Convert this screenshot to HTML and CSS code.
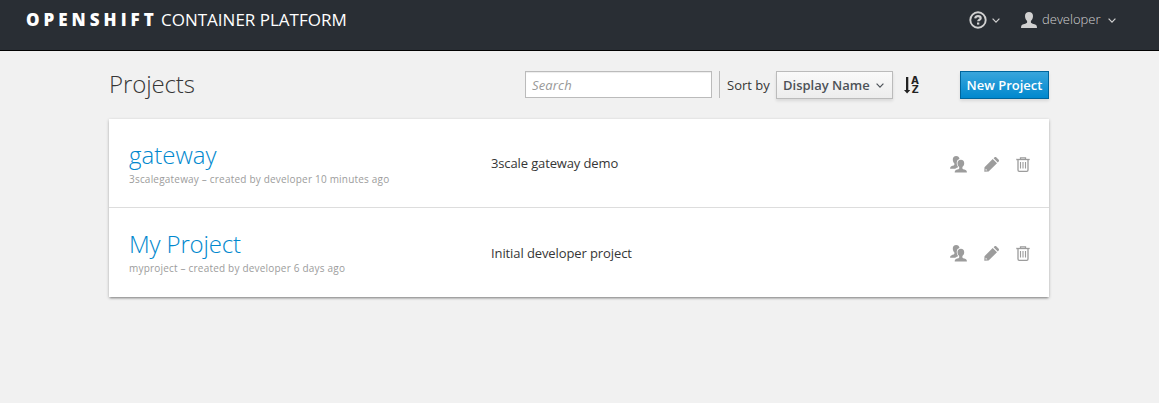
FILE: index.html
```html
<!DOCTYPE html>
<html lang="en">
<head>
<meta charset="utf-8">
<title>OpenShift Container Platform</title>
<link rel="stylesheet" href="styles.css">
</head>
<body>
<svg width="0" height="0" class="sprites" aria-hidden="true">
  <symbol id="chevron" viewBox="0 0 8 5"><path d="M.6 .7 4 4.1 7.4 .7" fill="none" stroke="currentColor" stroke-width="1.2"/></symbol>
  <symbol id="user" viewBox="0 0 16 16"><path d="M8 0C5.700 0 4 1.600 4 4c0 2.200.9 4 2.100 5v1.400C5.600 11.700 1.300 12 .6 13.300.2 14 0 15 0 16h16c0-1-.2-2-.6-2.700-.7-1.300-5-1.600-5.500-2.900V9C11.100 8 12 6.200 12 4 12 1.600 10.300 0 8 0z" fill="currentColor"/></symbol>
  <symbol id="users" viewBox="0 0 17 17">
    <path d="M6.200 0C4 0 2.800 1.400 2.800 3.500c0 1.700.6 3 1.600 3.900v1.300C4 9.700 1.100 9.900.5 11c-.3.500-.4 1.100-.4 1.700h5.200c.8-.9 2.300-1.100 2.800-1.700C7 9.600 6.600 8 6.800 6.300 7 4.500 7.900 3.500 9.500 3.100 9.300 1.200 8.100 0 6.200 0z" fill="currentColor"/>
    <path d="M10.900 3.800C8.700 3.800 7.500 5.200 7.500 7.200c0 1.700.6 2.900 1.700 3.800v1.400c-.4 1-3.500 1.200-4.100 2.300-.3.500-.4 1.100-.4 1.900h12.200c0-.8-.1-1.400-.4-1.900-.6-1.100-3.700-1.300-4.100-2.300V11c1.100-.9 1.800-2.100 1.800-3.800C14.200 5.200 13.100 3.800 10.900 3.800z" fill="currentColor"/>
  </symbol>
  <symbol id="pencil" viewBox="0 0 15 15"><path fill="currentColor" fill-rule="evenodd" d="M8.700 2 13 6.300 4.600 14.500.3 14.700.5 10.200zM9.600 1.200 10.600.3c.4-.4 1.200-.4 1.600 0l2.500 2.500c.4.400.4 1.200 0 1.600l-.9 1zM1.700 11.700l-.1 1.700 1.700-.1z"/></symbol>
  <symbol id="trash" viewBox="0 0 14 15"><g fill="none" stroke="currentColor"><path d="M.3 2.500H13.700" stroke-width="1.300"/><path d="M4.500 2.500V.8H9.500V2.500M2 2.500V13c0 .8.400 1.300 1.200 1.300h7.600c.8 0 1.200-.5 1.200-1.300V2.500" stroke-width="1.300"/><path d="M4.500 5v6.500M7 5v6.500M9.500 5v6.500" stroke-width="1.100"/></g></symbol>
</svg>
<header class="navbar">
  <div class="brand"><strong>OPENSHIFT</strong><span>CONTAINER PLATFORM</span></div>
  <nav class="tools">
    <a class="help">
      <svg class="icon-help" viewBox="0 0 18 18"><circle cx="9" cy="9" r="7.700" fill="none" stroke="currentColor" stroke-width="1.900"/><path d="M6.200 7.400C6.500 5.900 7.500 5.200 9 5.200c1.600 0 2.700.8 2.700 2 0 1.500-2.500 1.500-2.500 3.100" fill="none" stroke="currentColor" stroke-width="2.200"/><path d="M8 11.500h2.300v2.100H8z" fill="currentColor"/></svg>
      <svg class="chevron"><use href="#chevron"/></svg>
    </a>
    <a class="account">
      <svg class="icon-user"><use href="#user"/></svg>
      <span>developer</span>
      <svg class="chevron"><use href="#chevron"/></svg>
    </a>
  </nav>
</header>
<main class="container">
  <div class="toolbar">
    <h1>Projects</h1>
    <input class="search" type="text" placeholder="Search">
    <div class="sort">
      <span>Sort by</span>
      <button class="btn btn-default"><span>Display Name</span><svg class="chevron"><use href="#chevron"/></svg></button>
      <svg class="icon-sort" viewBox="0 0 16 17"><path d="M2 0h2.300v13h2L3.100 16.600 0 13h2z" fill="currentColor"/><text x="7" y="7.300" textLength="8" lengthAdjust="spacingAndGlyphs">A</text><text x="7.400" y="16.300" textLength="7.200" lengthAdjust="spacingAndGlyphs">Z</text></svg>
    </div>
    <button class="btn btn-primary">New Project</button>
  </div>
  <section class="projects">
    <article class="project">
      <div class="title"><h2>gateway</h2><small>3scalegateway – created by developer 10 minutes ago</small></div>
      <p>3scale gateway demo</p>
      <div class="actions">
        <svg class="icon-users"><use href="#users"/></svg>
        <svg class="icon-pencil"><use href="#pencil"/></svg>
        <svg class="icon-trash"><use href="#trash"/></svg>
      </div>
    </article>
    <article class="project">
      <div class="title"><h2>My Project</h2><small>myproject – created by developer 6 days ago</small></div>
      <p>Initial developer project</p>
      <div class="actions">
        <svg class="icon-users"><use href="#users"/></svg>
        <svg class="icon-pencil"><use href="#pencil"/></svg>
        <svg class="icon-trash"><use href="#trash"/></svg>
      </div>
    </article>
  </section>
</main>
</body>
</html>
```
FILE: styles.css
```css
* { box-sizing: border-box; }
body {
  margin: 0;
  min-height: 100vh;
  background: #f1f1f1;
  color: #363636;
  font: 13px/20px "Open Sans", sans-serif;
}
svg { display: block; flex: none; }
.sprites { position: absolute; }
.navbar {
  display: flex;
  justify-content: space-between;
  height: 51px;
  padding: 8px 43px 0 26px;
  background: #292e34;
  border-bottom: 1px solid #030303;
  color: #fff;
}
.brand { display: flex; height: 24px; line-height: 24px; font-size: 17px; white-space: nowrap; }
.brand strong { width: 135px; font-weight: 800; letter-spacing: 4px; }
.brand span { font-weight: 400; }
.tools { display: flex; height: 24px; color: #d1d1d1; }
.help, .account { display: flex; align-items: center; }
.help { margin-right: 21px; }
.help .chevron { margin: 1px 0 0 5px; }
.account span { margin: -2px 7px 0 5px; font-weight: 300; width: 59px; white-space: nowrap; }
.account .chevron { margin-top: 1px; }
.chevron { width: 8px; height: 5px; }
.icon-help { width: 18px; height: 18px; margin-top: -1px; }
.icon-user { width: 16px; height: 16px; }
.container { width: 940px; margin: 0 auto 0 109px; padding: 20px 0; }
.toolbar { display: flex; height: 28px; }
h1, h2 { margin: 0; font-size: 24px; font-weight: 300; line-height: 26px; letter-spacing: -.1px; }
h2 { letter-spacing: 0; }
h1 { width: 416px; }
.search {
  width: 187px;
  height: 27px;
  padding: 2px 6px;
  border: 1px solid #bbb;
  background: #fff;
  box-shadow: inset 0 1px 1px rgba(0,0,0,.075);
  font: 13px/20px "Open Sans", sans-serif;
}
.search::placeholder { color: #999; font-style: italic; opacity: 1; letter-spacing: .15px; }
.sort { display: flex; height: 27px; margin-left: 7px; padding-left: 7px; border-left: 1px solid #bbb; }
.sort > span { width: 49px; line-height: 28px; white-space: nowrap; }
.btn {
  display: flex;
  align-items: center;
  height: 28px;
  padding: 0 6px;
  border: 1px solid #bbb;
  font: 600 13px/20px "Open Sans", sans-serif;
  box-shadow: 0 2px 3px rgba(3,3,3,.1);
  white-space: nowrap;
}
.btn-default { width: 117px; color: #4d5258; background: linear-gradient(#fafafa, #ededed); justify-content: space-between; }
.btn-default .chevron { margin: 1px 2px 0 0; }
.btn-primary { width: 89px; margin-left: auto; justify-content: center; color: #fff; border-color: #00659c; background: linear-gradient(#39a5dc, #0088ce); }
.icon-sort { width: 16px; height: 17px; margin: 6px 0 0 11px; color: #222; overflow: visible; }
.icon-sort text { font: bold 10px "DejaVu Sans Mono", monospace; fill: currentColor; }
.projects { margin-top: 20px; background: #fff; box-shadow: 0 1px 3px rgba(3,3,3,.25), 0 2px 2px -1px rgba(3,3,3,.3); }
.project { display: grid; grid-template-columns: 362px 1fr auto; height: 89px; padding: 23px 19px 0 20px; }
.project:first-child { border-bottom: 1px solid #ddd; }
.project:last-child h2 { letter-spacing: -.15px; }
.title h2 { color: #0088ce; }
.title small { display: block; margin-top: 4px; color: #9c9c9c; font-size: 10px; line-height: 14px; letter-spacing: .2px; }
.project p { margin: 11px 0 0; letter-spacing: -.13px; }
.project:last-child p { margin-top: 12px; letter-spacing: -.1px; }
.actions { display: flex; align-items: center; height: 17px; margin-top: 14px; color: #9c9c9c; }
.icon-users { width: 17px; height: 17px; margin-right: 17px; }
.icon-pencil { width: 15px; height: 15px; margin: -1px 17px 0 0; }
.icon-trash { width: 14px; height: 15px; margin-top: -1px; }
```
